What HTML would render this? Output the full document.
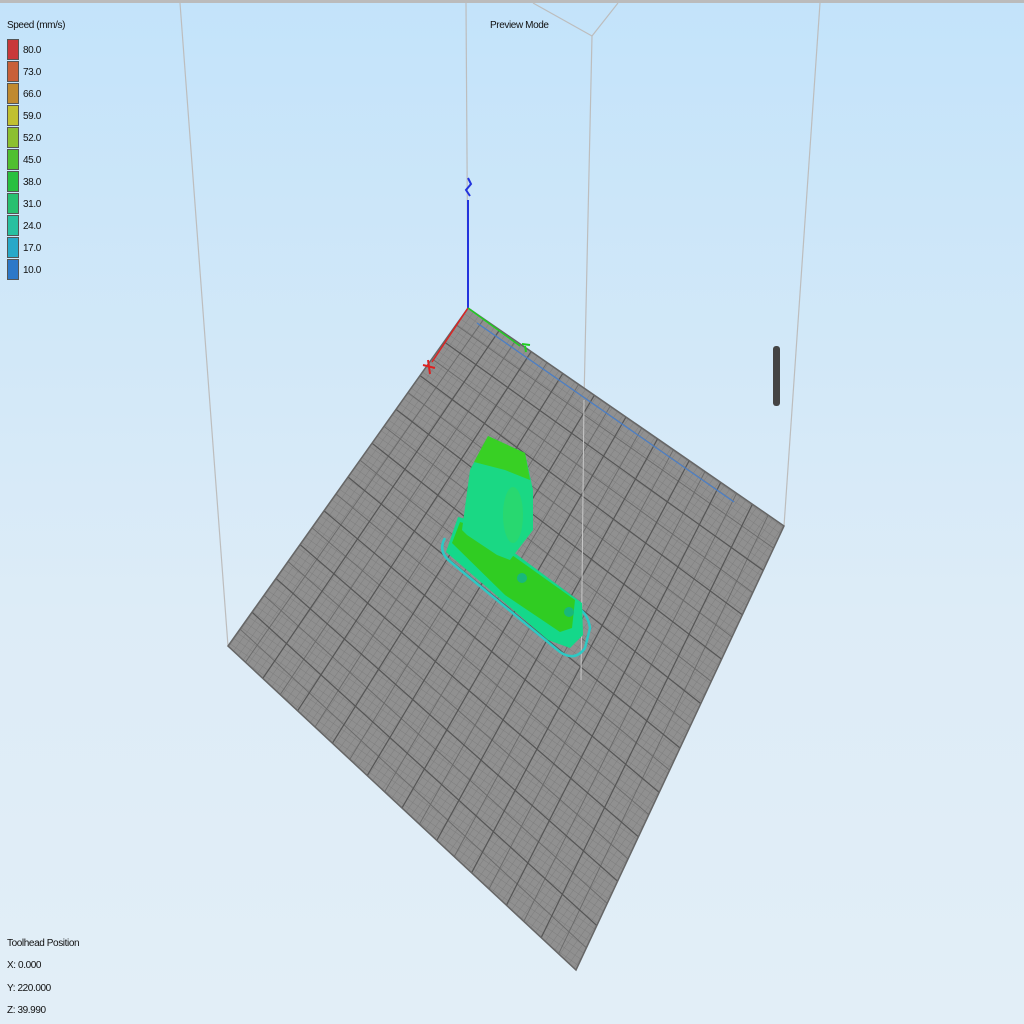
<!DOCTYPE html>
<html><head><style>
body{margin:0;width:1024px;height:1024px;overflow:hidden;background:linear-gradient(#c3e3fa,#ddecf7 60%,#e2eef7);font-family:"Liberation Sans",sans-serif;font-size:10px;color:#111;position:relative}
.t{position:absolute;letter-spacing:-0.4px}
.leg{position:absolute;left:7px;width:12px;height:21px;border:1px solid #555;box-sizing:border-box}
</style></head><body>
<div style="position:absolute;left:0;top:0;width:1024px;height:3px;background:#bbb"></div>
<svg width="1024" height="1024" style="position:absolute;left:0;top:0">
<g stroke="#bdbdbd" stroke-width="1.2" fill="none">
<line x1="180" y1="3" x2="228" y2="646"/>
<line x1="466" y1="3" x2="468" y2="308"/>
<line x1="820" y1="3" x2="784" y2="526"/>
<line x1="533" y1="3" x2="592" y2="36"/>
<line x1="618" y1="3" x2="592" y2="36"/>
<line x1="592" y1="36" x2="584" y2="400"/>
</g>
<defs><pattern id="g" width="6.5" height="6.5" patternUnits="userSpaceOnUse" patternTransform="matrix(0.82,0.57,-0.58,0.82,468,308)"><rect width="7" height="7" fill="#909090"/><path d="M0 0H7M0 0V7" stroke="#777" stroke-width="0.7"/></pattern></defs>
<polygon points="468,308 784,526 576,970 228,646" fill="url(#g)"/>
<g stroke="#6a6a6a" stroke-width="0.9">
<line x1="483.8" y1="318.9" x2="245.4" y2="662.2"/><line x1="515.4" y1="340.7" x2="280.2" y2="694.6"/><line x1="547" y1="362.5" x2="315" y2="727"/><line x1="578.6" y1="384.3" x2="349.8" y2="759.4"/><line x1="610.2" y1="406.1" x2="384.6" y2="791.8"/><line x1="641.8" y1="427.9" x2="419.4" y2="824.2"/><line x1="673.4" y1="449.7" x2="454.2" y2="856.6"/><line x1="705" y1="471.5" x2="489" y2="889"/><line x1="736.6" y1="493.3" x2="523.8" y2="921.4"/><line x1="768.2" y1="515.1" x2="558.6" y2="953.8"/>
<line x1="456" y1="324.9" x2="773.6" y2="548.2"/><line x1="432" y1="358.7" x2="752.8" y2="592.6"/><line x1="408" y1="392.5" x2="732" y2="637"/><line x1="384" y1="426.3" x2="711.2" y2="681.4"/><line x1="360" y1="460.1" x2="690.4" y2="725.8"/><line x1="336" y1="493.9" x2="669.6" y2="770.2"/><line x1="312" y1="527.7" x2="648.8" y2="814.6"/><line x1="288" y1="561.5" x2="628" y2="859"/><line x1="264" y1="595.3" x2="607.2" y2="903.4"/><line x1="240" y1="629.1" x2="586.4" y2="947.8"/>
</g>
<g stroke="#555" stroke-width="1.2">
<line x1="499.6" y1="329.8" x2="262.8" y2="678.4"/><line x1="531.2" y1="351.6" x2="297.6" y2="710.8"/><line x1="562.8" y1="373.4" x2="332.4" y2="743.2"/><line x1="594.4" y1="395.2" x2="367.2" y2="775.6"/><line x1="626" y1="417" x2="402" y2="808"/><line x1="657.6" y1="438.8" x2="436.8" y2="840.4"/><line x1="689.2" y1="460.6" x2="471.6" y2="872.8"/><line x1="720.8" y1="482.4" x2="506.4" y2="905.2"/><line x1="752.4" y1="504.2" x2="541.2" y2="937.6"/>
<line x1="444" y1="341.8" x2="763.2" y2="570.4"/><line x1="420" y1="375.6" x2="742.4" y2="614.8"/><line x1="396" y1="409.4" x2="721.6" y2="659.2"/><line x1="372" y1="443.2" x2="700.8" y2="703.6"/><line x1="348" y1="477" x2="680" y2="748"/><line x1="324" y1="510.8" x2="659.2" y2="792.4"/><line x1="300" y1="544.6" x2="638.4" y2="836.8"/><line x1="276" y1="578.4" x2="617.6" y2="881.2"/><line x1="252" y1="612.2" x2="596.8" y2="925.6"/>
</g>
<polygon points="468,308 784,526 576,970 228,646" fill="none" stroke="#666" stroke-width="1.5"/>
<line x1="584" y1="400" x2="581" y2="680" stroke="#c8c8c8" stroke-width="1"/>
<line x1="477" y1="323" x2="734" y2="502" stroke="#4a7fc8" stroke-width="1.2"/>
<line x1="468" y1="308" x2="468" y2="200" stroke="#2233dd" stroke-width="2"/>
<path d="M468 178 l3 6 -5 6 4 6" stroke="#2233dd" stroke-width="2" fill="none"/>
<line x1="468" y1="308" x2="432" y2="362" stroke="#dd2222" stroke-width="1.5"/>
<path d="M423 365 l12 3 M428 360 l2 14" stroke="#dd2222" stroke-width="2"/>
<line x1="468" y1="308" x2="520" y2="346" stroke="#22cc22" stroke-width="1.5"/>
<path d="M522 344 l8 1 M525 346 l1 6" stroke="#22cc22" stroke-width="2"/>
<rect x="773" y="346" width="7" height="60" rx="3" fill="#444"/>
<path d="M445 538 Q437 552 452 563 L560 652 Q575 662 585 648 L590 628 Q588 614 578 608" fill="none" stroke="#2dc9c4" stroke-width="2.5"/>
<polygon points="446,552 458,517 470,520 582,603 583,635 570,648 548,640" fill="#14d88a"/>
<polygon points="452,543 460,522 470,525 575,600 572,628 560,632 505,595" fill="#30cc22"/>
<polygon points="470,470 488,436 525,453 533,490 533,530 510,560 497,555 467,535 462,530" fill="#1ad884"/>
<polygon points="474,462 488,436 525,453 530,480 505,470" fill="#38d024"/>
<ellipse cx="513" cy="515" rx="10" ry="28" fill="#28d870"/>
<circle cx="522" cy="578" r="5" fill="#18b87a"/><circle cx="569" cy="612" r="5" fill="#18b87a"/>
</svg>
<div class="t" style="left:7px;top:20px">Speed (mm/s)</div>
<div class="t" style="left:490px;top:20px">Preview Mode</div>
<div class="leg" style="top:39px;background:#c8383a"></div><div class="t" style="left:23px;top:45px">80.0</div>
<div class="leg" style="top:61px;background:#c86038"></div><div class="t" style="left:23px;top:67px">73.0</div>
<div class="leg" style="top:83px;background:#c08a30"></div><div class="t" style="left:23px;top:89px">66.0</div>
<div class="leg" style="top:105px;background:#c0c030"></div><div class="t" style="left:23px;top:111px">59.0</div>
<div class="leg" style="top:127px;background:#8cc030"></div><div class="t" style="left:23px;top:133px">52.0</div>
<div class="leg" style="top:149px;background:#50c030"></div><div class="t" style="left:23px;top:155px">45.0</div>
<div class="leg" style="top:171px;background:#28c040"></div><div class="t" style="left:23px;top:177px">38.0</div>
<div class="leg" style="top:193px;background:#28c070"></div><div class="t" style="left:23px;top:199px">31.0</div>
<div class="leg" style="top:215px;background:#28c0a0"></div><div class="t" style="left:23px;top:221px">24.0</div>
<div class="leg" style="top:237px;background:#28a8c8"></div><div class="t" style="left:23px;top:243px">17.0</div>
<div class="leg" style="top:259px;background:#2c78c8"></div><div class="t" style="left:23px;top:265px">10.0</div>
<div class="t" style="left:7px;top:938px">Toolhead Position</div>
<div class="t" style="left:7px;top:960px">X: 0.000</div>
<div class="t" style="left:7px;top:983px">Y: 220.000</div>
<div class="t" style="left:7px;top:1005px">Z: 39.990</div>
</body></html>
